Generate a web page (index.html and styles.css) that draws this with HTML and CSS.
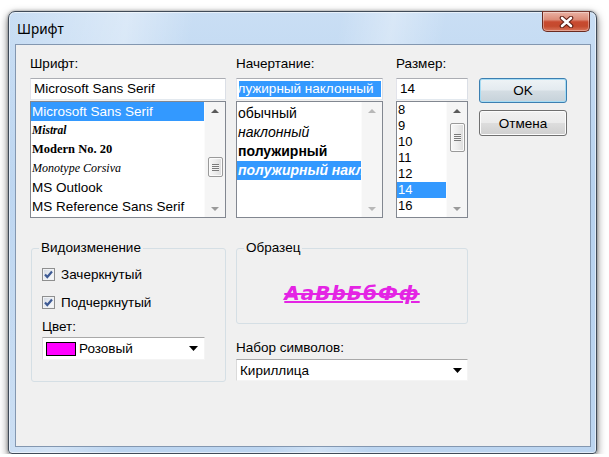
FILE: index.html
```html
<!DOCTYPE html>
<html lang="ru">
<head>
<meta charset="utf-8">
<title>Шрифт</title>
<link rel="stylesheet" href="styles.css">
</head>
<body>
<div class="window">
  <div class="titlebar">
    <span class="title">Шрифт</span>
    <div class="close">
      <svg width="15" height="12" viewBox="0 0 15 12">
        <path d="M3 2 L12 10 M12 2 L3 10" stroke="#5b1c12" stroke-width="4.6" stroke-linecap="round"/>
        <path d="M3 2 L12 10 M12 2 L3 10" stroke="#ffffff" stroke-width="2.6" stroke-linecap="round"/>
      </svg>
    </div>
  </div>
  <div class="client">
    <div class="top">
      <div class="col col-font">
        <div class="label">Шрифт:</div>
        <div class="edit">Microsoft Sans Serif</div>
        <div class="list">
          <div class="items rows-19">
            <div class="item sel">Microsoft Sans Serif</div>
            <div class="item f-mistral">Mistral</div>
            <div class="item f-modern">Modern No. 20</div>
            <div class="item f-corsiva">Monotype Corsiva</div>
            <div class="item">MS Outlook</div>
            <div class="item">MS Reference Sans Serif</div>
          </div>
          <div class="vscroll">
            <div class="arrow"><span class="tri-up"></span></div>
            <div class="track"><div class="thumb thumb-font"><span class="grip"></span></div></div>
            <div class="arrow"><span class="tri-down"></span></div>
          </div>
        </div>
      </div>
      <div class="col col-style">
        <div class="label">Начертание:</div>
        <div class="edit"><div class="edit-sel">полужирный наклонный</div></div>
        <div class="list">
          <div class="items rows-19 pad-top">
            <div class="item">обычный</div>
            <div class="item s-italic">наклонный</div>
            <div class="item s-bold">полужирный</div>
            <div class="item s-bold s-italic sel">полужирный наклонный</div>
          </div>
          <div class="vscroll disabled">
            <div class="arrow"><span class="tri-up"></span></div>
            <div class="track"></div>
            <div class="arrow"><span class="tri-down"></span></div>
          </div>
        </div>
      </div>
      <div class="col col-size">
        <div class="label">Размер:</div>
        <div class="edit">14</div>
        <div class="list">
          <div class="items rows-16">
            <div class="item">8</div>
            <div class="item">9</div>
            <div class="item">10</div>
            <div class="item">11</div>
            <div class="item">12</div>
            <div class="item sel">14</div>
            <div class="item">16</div>
          </div>
          <div class="vscroll">
            <div class="arrow"><span class="tri-up"></span></div>
            <div class="track"><div class="thumb thumb-size"><span class="grip"></span></div></div>
            <div class="arrow"><span class="tri-down"></span></div>
          </div>
        </div>
      </div>
      <div class="buttons">
        <button class="btn default">OK</button>
        <button class="btn">Отмена</button>
      </div>
    </div>

    <div class="bottom">
      <fieldset class="group effects">
        <legend>Видоизменение</legend>
        <div class="check-row first">
          <span class="checkbox"><svg width="11" height="11" viewBox="0 0 11 11"><path d="M2 5.5 L4.3 8 L9 2.5" fill="none" stroke="#3d5a94" stroke-width="2.2"/></svg></span>
          <span>Зачеркнутый</span>
        </div>
        <div class="check-row">
          <span class="checkbox"><svg width="11" height="11" viewBox="0 0 11 11"><path d="M2 5.5 L4.3 8 L9 2.5" fill="none" stroke="#3d5a94" stroke-width="2.2"/></svg></span>
          <span>Подчеркнутый</span>
        </div>
        <div class="label color-label">Цвет:</div>
        <div class="combo color-combo">
          <span class="swatch"></span>
          <span class="combo-text">Розовый</span>
          <svg class="combo-arrow" width="9" height="5" viewBox="0 0 9 5"><path d="M0 0 H9 L4.5 5 Z" fill="#000"/></svg>
        </div>
      </fieldset>
      <div class="col2">
        <fieldset class="group sample">
          <legend>Образец</legend>
          <div class="sample-text">AaBbБбФф</div>
        </fieldset>
        <div class="label charset-label">Набор символов:</div>
        <div class="combo charset-combo">
          <span class="combo-text">Кириллица</span>
          <svg class="combo-arrow" width="9" height="5" viewBox="0 0 9 5"><path d="M0 0 H9 L4.5 5 Z" fill="#000"/></svg>
        </div>
      </div>
    </div>
  </div>
</div>
</body>
</html>
```
FILE: styles.css
```css
* { box-sizing: border-box; }

body {
  margin: 0;
  background: #ffffff;
  font-family: "Liberation Sans", Arial, sans-serif;
  font-size: 13.5px;
  color: #000;
}

.window {
  width: 589px;
  height: 443px;
  margin: 11px 0 0 8px;
  border: 1px solid #404b58;
  border-radius: 7px 7px 4px 4px;
  background:
    linear-gradient(100deg, rgba(255,255,255,0) 0%, rgba(255,255,255,.35) 18%, rgba(255,255,255,0) 28%, rgba(255,255,255,0) 50%, rgba(255,255,255,.3) 58%, rgba(255,255,255,0) 66%),
    linear-gradient(180deg, #c9def4 0%, #b7d2ef 40%, #bcd5f0 100%);
  box-shadow: 0 3px 9px rgba(0,0,0,.55), 0 0 3px rgba(0,0,0,.35), inset 0 0 0 1px rgba(255,255,255,.55);
  padding: 0 5px 6px 6px;
  display: flex;
  flex-direction: column;
}

.titlebar {
  height: 32px;
  display: flex;
  align-items: flex-start;
}

.title {
  font-family: "Noto Sans", "Open Sans", sans-serif;
  font-size: 13.5px;
  line-height: 18px;
  margin: 8px 0 0 2px;
  color: #000;
}

.close {
  margin-left: auto;
  margin-right: 1px;
  margin-top: -1px;
  width: 48px;
  height: 21px;
  border: 1px solid #6a2a20;
  border-top-color: #7a3a30;
  border-radius: 0 0 5px 5px;
  background: linear-gradient(180deg, #eab2a4 0%, #dc8c78 40%, #c84a30 52%, #c44a2e 75%, #d9765c 100%);
  box-shadow: inset 0 0 0 1px rgba(255,255,255,.35);
  display: flex;
  align-items: center;
  justify-content: center;
}

.client {
  flex: 1;
  background: #f0f0f0;
  border: 1px solid #8397b0;
  padding: 11px 0 0 14px;
}

.top {
  display: flex;
}

.label {
  height: 16px;
  line-height: 16px;
  margin-bottom: 6px;
  white-space: nowrap;
}

.col-font { width: 196px; }
.col-style { width: 147px; margin-left: 10px; }
.col-size { width: 72px; margin-left: 13px; }

.edit {
  height: 22px;
  border: 1px solid;
  border-color: #abadb3 #dbdfe6 #e3e9ef #e2e3ea;
  background: #fff;
  padding: 0 3px;
  line-height: 20px;
  white-space: nowrap;
  overflow: hidden;
}

.edit-sel {
  margin: 2px -2px 0 -1px;
  height: 16px;
  line-height: 16px;
  background: #3399ff;
  color: #fff;
  text-indent: -16px;
  white-space: nowrap;
  overflow: hidden;
}

.list {
  height: 117px;
  margin-top: 1px;
  border: 1px solid #828790;
  background: #fff;
  display: flex;
}

.items {
  flex: 1;
  min-width: 0;
  overflow: hidden;
}

.item {
  padding-left: 1px;
  white-space: nowrap;
  overflow: hidden;
}

.rows-19 .item { height: 19px; line-height: 19px; }
.rows-16 .item { height: 16px; line-height: 16px; font-size: 13px; }
.pad-top { padding-top: 2px; }

.item.sel { background: #3399ff; color: #fff; }

.f-mistral { font-family: "Liberation Serif", serif; font-style: italic; font-weight: bold; font-size: 11.5px; }
.f-modern { font-family: "Liberation Serif", serif; font-weight: bold; font-size: 12.5px; }
.f-corsiva { font-family: "Liberation Serif", serif; font-style: italic; font-size: 12px; }

.col-style .item { font-size: 14px; }
.s-italic { font-style: italic; }
.s-bold { font-weight: bold; }

.vscroll {
  width: 21px;
  display: flex;
  flex-direction: column;
  background: #f5f5f5;
  border-left: 1px solid #fbfbfb;
}

.arrow {
  height: 17px;
  display: flex;
  align-items: center;
  justify-content: center;
}

.tri-up, .tri-down {
  width: 0;
  height: 0;
  border-left: 4px solid transparent;
  border-right: 4px solid transparent;
}
.tri-up { border-bottom: 4px solid #5a5a5a; }
.tri-down { border-top: 4px solid #5a5a5a; }
.vscroll .arrow:last-child .tri-down { border-top-color: #9a9a9a; }
.disabled .tri-up { border-bottom-color: #b8b8b8; }
.disabled .tri-down, .disabled .arrow:last-child .tri-down { border-top-color: #b8b8b8; }

.track {
  flex: 1;
  display: flex;
  flex-direction: column;
  align-items: center;
}

.thumb {
  width: 15px;
  border: 1px solid #9a9a9a;
  border-radius: 2px;
  background: linear-gradient(90deg, #f8f8f8 0%, #ececec 50%, #dcdcdc 100%);
  box-shadow: inset 0 0 0 1px #fbfbfb;
  display: flex;
  align-items: center;
  justify-content: center;
}
.thumb-font { margin-top: 38px; height: 20px; }
.thumb-size { margin-top: 4px; height: 29px; }

.grip {
  width: 7px;
  height: 7px;
  background: repeating-linear-gradient(180deg, #7a7a7a 0 1px, #f4f4f4 1px 2px);
}

.buttons {
  margin-left: 11px;
  padding-top: 22px;
  display: flex;
  flex-direction: column;
  gap: 7px;
}

.btn {
  width: 88px;
  height: 25px;
  padding: 0;
  border: 1px solid #707070;
  border-radius: 3px;
  background: linear-gradient(180deg, #f2f2f2 0%, #ebebeb 48%, #dddddd 52%, #cfcfcf 100%);
  box-shadow: inset 0 0 0 1px #fcfcfc;
  font-family: "Liberation Sans", Arial, sans-serif;
  font-size: 13.5px;
  color: #000;
}
.btn + .btn { height: 26px; }

.btn.default {
  border-color: #3c7fb1;
  background: linear-gradient(180deg, #eef3f6 0%, #e3eaef 48%, #d4dde3 52%, #c6d2da 100%);
  box-shadow: inset 0 0 0 1px #a6dcf4;
}

.bottom {
  display: flex;
  margin-top: 22px;
}

.group {
  margin: 0;
  border: 1px solid #d5dfe5;
  border-radius: 3px;
  padding: 0 0 0 10px;
  min-width: 0;
}

.group legend {
  padding: 0 2px;
  margin-left: -3px;
  line-height: 16px;
  height: 16px;
}

.effects {
  width: 195px;
  height: 142px;
  margin-left: 1px;
}

.check-row {
  height: 16px;
  display: flex;
  align-items: center;
  white-space: nowrap;
}
.check-row.first { margin-top: 10px; }
.check-row + .check-row { margin-top: 12px; }

.checkbox {
  width: 13px;
  height: 13px;
  margin-right: 6px;
  border: 1px solid #8e8f8f;
  background: linear-gradient(135deg, #cfd6e0 0%, #eef1f5 60%, #fafbfc 100%);
  box-shadow: inset 0 0 0 1px #f0f2f5;
  display: flex;
  align-items: center;
  justify-content: center;
}

.color-label {
  margin-top: 9px;
  margin-bottom: 2px;
}

.combo {
  height: 23px;
  background: #fff;
  border-top: 1px solid #a9a9a9;
  border-left: 1px solid #dadada;
  border-right: 1px solid #f4f4f4;
  border-bottom: 1px solid #f4f4f4;
  display: flex;
  align-items: center;
  white-space: nowrap;
}

.color-combo {
  width: 163px;
  padding-left: 3px;
}

.swatch {
  width: 30px;
  height: 14px;
  background: #ff00ff;
  border: 1px solid #000;
  margin-right: 3px;
}

.combo-text { flex: 1; }

.combo-arrow {
  margin-right: 6px;
}

.col2 {
  margin-left: 10px;
  width: 232px;
  display: flex;
  flex-direction: column;
}

.sample {
  width: 232px;
  height: 84px;
}

.sample-text {
  margin: 24px 0 0 -10px;
  text-align: center;
  line-height: 26px;
  font-family: "DejaVu Sans", sans-serif;
  font-weight: bold;
  font-style: italic;
  font-size: 20px;
  letter-spacing: 1px;
  color: #e424e4;
  text-decoration: underline line-through;
  text-decoration-thickness: 2px;
}

.charset-label {
  margin-top: 16px;
  margin-bottom: 3px;
}

.charset-combo {
  width: 232px;
  height: 22px;
  padding-left: 3px;
}
.charset-combo .combo-arrow { margin-right: 5px; }
```
